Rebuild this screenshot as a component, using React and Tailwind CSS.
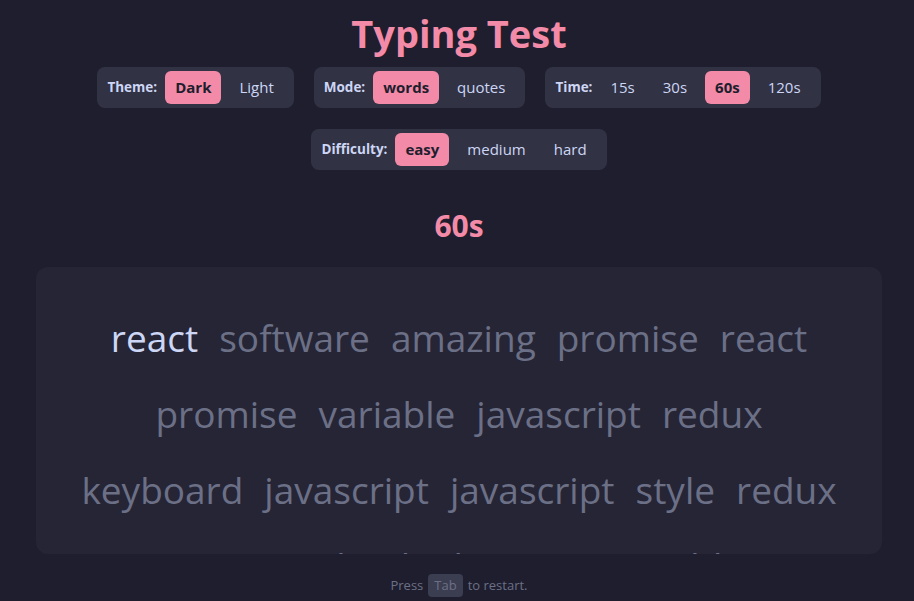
import React from "react";

function Group({ label, options, active }) {
  return (
    <div className="flex h-[41px] items-center gap-2 rounded-lg bg-[#313244] px-2.5">
      <span className="text-[13.5px] font-bold text-[#cdd6f4]">{label}</span>
      {options.map((o) => (
        <button
          key={o}
          className={
            o === active
              ? "h-[33px] rounded-md bg-[#f38ba8] px-2.5 text-[15px] font-bold text-[#1e1e2e]"
              : "h-[33px] rounded-md px-2.5 text-[15px] text-[#cdd6f4]"
          }
        >
          {o}
        </button>
      ))}
    </div>
  );
}

const lines = [
  ["react", "software", "amazing", "promise", "react"],
  ["promise", "variable", "javascript", "redux"],
  ["keyboard", "javascript", "javascript", "style", "redux"],
  ["write", "code", "deploy", "run", "variable"],
];

export default function App() {
  return (
    <div
      className="min-h-[601px] bg-[#1e1e2e] flex flex-col items-center pl-1"
      style={{ fontFamily: '"Open Sans", "Noto Sans", sans-serif' }}
    >
      <h1 className="mt-[8px] text-[38px] leading-[50px] font-bold text-[#f38ba8]">Typing Test</h1>
      <div className="mt-[9px] flex flex-wrap justify-center gap-x-5 gap-y-[21px] w-full px-4">
        <Group label="Theme:" options={["Dark", "Light"]} active="Dark" />
        <Group label="Mode:" options={["words", "quotes"]} active="words" />
        <Group label="Time:" options={["15s", "30s", "60s", "120s"]} active="60s" />
        <Group label="Difficulty:" options={["easy", "medium", "hard"]} active="easy" />
      </div>
      <div className="mt-[36px] text-[30px] leading-[40px] font-bold text-[#f38ba8]">60s</div>
      <div className="mt-[21px] w-[846px] h-[287px] overflow-hidden rounded-xl bg-[#252536] pt-[33px]">
        {lines.map((line, i) => (
          <div key={i} className="flex justify-center gap-[21px] text-[37px] leading-[76px]">
            {line.map((w, j) => (
              <span
                key={j}
                className={i === 0 && j === 0 ? "text-[#cdd6f4]" : "text-[#6c7086]"}
              >
                {w}
              </span>
            ))}
          </div>
        ))}
      </div>
      <div className="mt-[20px] flex items-center gap-[5px] text-[13px] text-[#6c7086]">
        <span>Press</span>
        <span className="rounded bg-[#3b3d50] px-[6px] py-[2px] leading-[19px]">Tab</span>
        <span>to restart.</span>
      </div>
    </div>
  );
}
